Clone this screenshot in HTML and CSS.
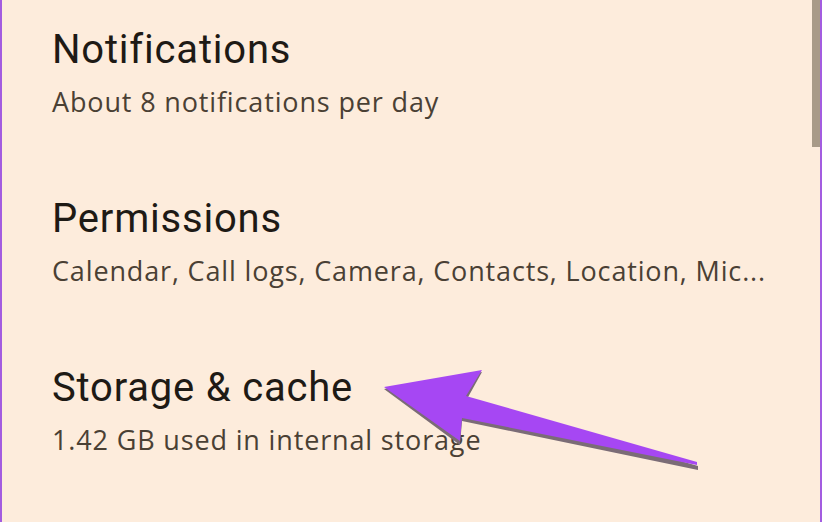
FILE: index.html
```html
<!DOCTYPE html>
<html>
<head>
<meta charset="utf-8">
<link rel="stylesheet" href="styles.css">
</head>
<body>
<div class="screen">
  <div class="list">
    <div class="item">
      <div class="title">Notifications</div>
      <div class="sub">About 8 notifications per day</div>
    </div>
    <div class="item">
      <div class="title">Permissions</div>
      <div class="sub">Calendar, Call logs, Camera, Contacts, Location, Mic...</div>
    </div>
    <div class="item">
      <div class="title">Storage &amp; cache</div>
      <div class="sub">1.42 GB used in internal storage</div>
    </div>
  </div>
  <div class="scrollbar"></div>
  <svg class="arrow" width="822" height="522" viewBox="0 0 822 522">
    <polygon class="arrow-shadow" points="384,389 482,372 467,399 698,466 698,470 462,421 460,445" />
    <polygon class="arrow-fill" points="384,387 482,370 466,396 697,462 697,465 462,418 460,441" />
  </svg>
</div>
</body>
</html>
```
FILE: styles.css
```css
html, body {
  margin: 0;
  padding: 0;
  background: #fdecdc;
}
.screen {
  position: relative;
  width: 822px;
  height: 522px;
  box-sizing: border-box;
  border-left: 2px solid #a35ce0;
  border-right: 2px solid #a35ce0;
  background: #fdecdc;
  overflow: hidden;
  font-family: Roboto, "Open Sans", sans-serif;
}
.list {
  display: flex;
  flex-direction: column;
  gap: 76px;
  padding: 26px 0 0 50px;
}
.item {
  display: flex;
  flex-direction: column;
  gap: 11px;
}
.title {
  font-size: 40px;
  line-height: 48px;
  letter-spacing: 0.8px;
  color: #1e1a15;
}
.sub {
  font-family: "Open Sans", Roboto, sans-serif;
  font-size: 27px;
  line-height: 34px;
  letter-spacing: 0.85px;
  color: #4a4034;
}
.scrollbar {
  position: absolute;
  top: 0;
  right: 0;
  width: 8px;
  height: 147px;
  background: #a89a88;
}
.arrow {
  position: absolute;
  left: -2px;
  top: 0;
}
.arrow-shadow {
  fill: #7b6c76;
}
.arrow-fill {
  fill: #a647f3;
}
```
